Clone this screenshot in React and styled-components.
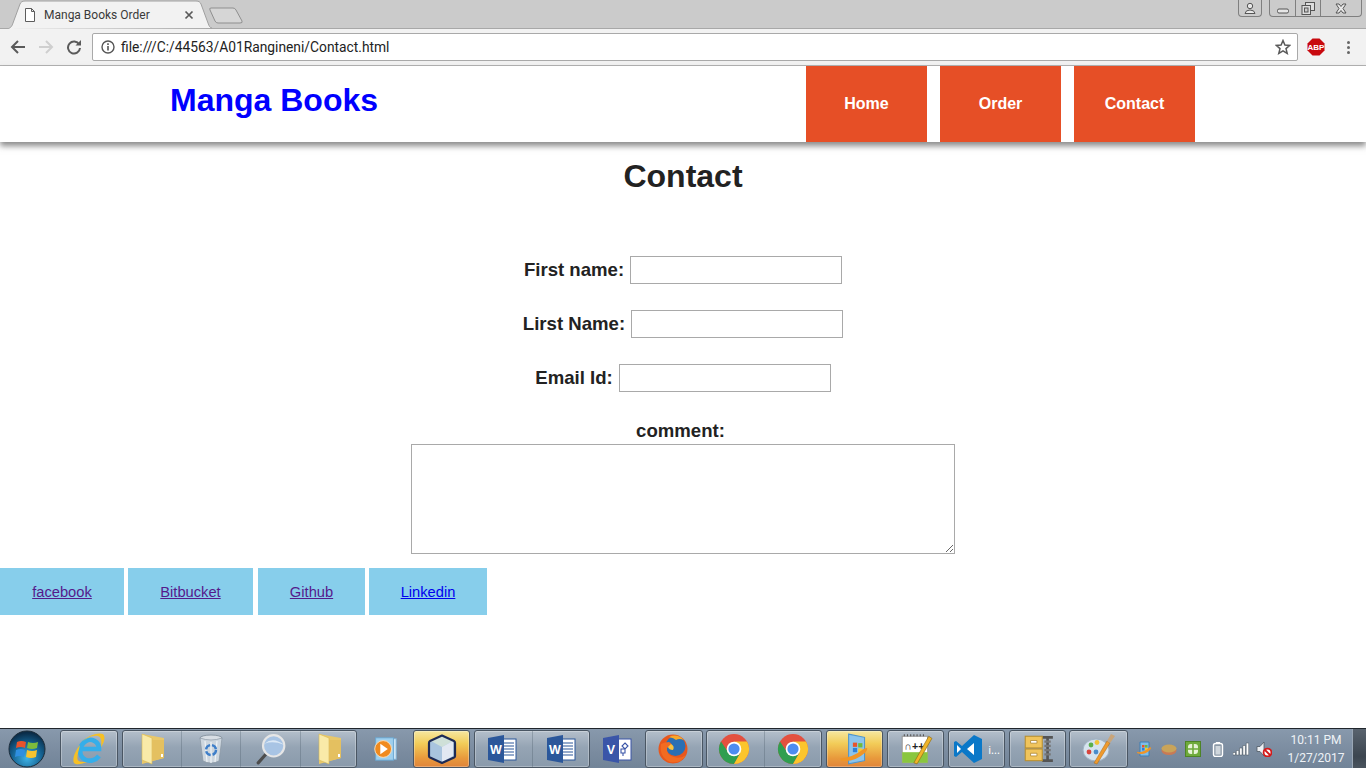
import React from "react";
import styled, { createGlobalStyle } from "styled-components";

const Global = createGlobalStyle`
  html, body { margin: 0; padding: 0; background: #fff; overflow: hidden; }
  * { box-sizing: border-box; }
`;

const Screen = styled.div`
  width: 1366px; height: 768px; display: flex; flex-direction: column; overflow: hidden;
  font-family: "Liberation Sans", Arial, sans-serif;
`;

/* browser chrome */
const TabStrip = styled.div`
  height: 29px; flex: none; background: #cbcbcb; border-bottom: 1px solid #a8a8a8;
  display: flex; align-items: flex-start; padding-left: 7px;
`;
const Tab = styled.div`
  position: relative; width: 205px; height: 29px; display: flex; align-items: center;
  padding: 1px 0 0 16px; font: 12px "Roboto", "Noto Sans", sans-serif; color: #3a3a3a;
`;
const TabShape = styled.svg`
  position: absolute; left: 0; top: 0; width: 205px; height: 29px;
`;
const TabFile = styled.svg`
  position: relative; width: 14px; height: 16px; flex: none; margin-right: 7px;
`;
const TabTitle = styled.span`
  position: relative; width: 140px; white-space: nowrap;
`;
const TabClose = styled.svg`position: relative; width: 10px; height: 10px; flex: none;`;
const NewTab = styled.svg`
  width: 38px; height: 20px; margin: 6px 0 0 -5px; flex: none;
`;
const Spacer = styled.div`flex: 1;`;
const WindowGroup = styled.div`
  display: flex; height: 17px; margin-right: ${p => p.$mr}px; border: 1px solid #7f7f7f; border-top: 0;
  border-radius: 0 0 4px 4px;
`;
const WindowButton = styled.div`
  width: ${p => p.$w}px; display: flex; align-items: center; justify-content: center;
  & + & { border-left: 1px solid #7f7f7f; }
`;
const MinimizeGlyph = styled.svg`width: 14px; height: 6px; margin-top: 5px;`;
const Toolbar = styled.div`
  height: 37px; flex: none; background: #f2f2f2; border-bottom: 1px solid #b4b4b4;
  display: flex; align-items: center; padding: 0 0 0 7px;
`;
const NavIcon = styled.div`
  width: 21px; height: 21px; margin-right: ${p => p.$mr}px; display: flex; align-items: center; justify-content: center; flex: none;
`;
const Omnibox = styled.div`
  width: 1206px; height: 28px; background: #fff; border: 1px solid #a9a9a9; border-radius: 2px;
  display: flex; align-items: center; padding: 0 6px 0 8px; flex: none;
`;
const OmniGlyph = styled.svg`flex: none;`;
const Url = styled.span`
  margin-left: 6px; flex: 1; font: 13.8px "Roboto", "Noto Sans", sans-serif; color: #222; white-space: nowrap;
`;
const Abp = styled.svg`width: 18px; height: 18px; margin-left: 9px; flex: none;`;
const Dots = styled.div`
  margin-left: 22px; display: flex; flex-direction: column; gap: 2px;
  & > i { display: block; width: 3px; height: 3px; background: #666; border-radius: 50%; }
`;

/* page */
const Page = styled.div`flex: 1; min-height: 0; background: #fff; display: flex; flex-direction: column;`;
const Header = styled.header`
  height: 76px; flex: none; background: #fff; display: flex; align-items: stretch;
  box-shadow: 0 4px 6px rgba(60,60,60,.6); position: relative; padding-left: 170px;
`;
const Brand = styled.div`
  width: 636px; color: #0000ff; font-size: 32px; font-weight: 700; line-height: 68px; white-space: nowrap;
`;
const Nav = styled.nav`display: flex; gap: 13px;`;
const NavItem = styled.a`
  width: 121px; background: #e64f26; color: #fff; font-size: 16px; font-weight: 700;
  display: flex; align-items: center; justify-content: center; text-decoration: none;
`;
const Title = styled.h1`
  margin: 16px 0 0; font-size: 32px; line-height: 37px; font-weight: 700; color: #222; text-align: center;
`;
const Form = styled.form`
  margin-top: 61px; display: flex; flex-direction: column; align-items: center;
`;
const Row = styled.div`
  height: 28px; margin-bottom: 26px; display: flex; align-items: center; gap: 6px;
`;
const Label = styled.label`
  font-size: 18.6px; font-weight: 700; color: #222; line-height: 28px; white-space: nowrap;
`;
const TextInput = styled.input`
  width: 212px; height: 28px; border: 1px solid #a9a9a9; background: #fff; padding: 0 4px; outline: 0; border-radius: 0;
`;
const CommentLabel = styled(Label)`
  display: block; height: 26px; line-height: 25px; padding-right: 5px;
`;
const Comment = styled.textarea`
  display: block; width: 544px; height: 110px; border: 1px solid #a9a9a9; background: #fff; outline: 0; border-radius: 0; margin: 0;
`;
const Links = styled.div`display: flex; margin-top: 14px;`;
const LinkBox = styled.a`
  width: ${p => p.$w}px; height: 47px; margin-right: ${p => p.$mr}px; background: #87ceeb; flex: none;
  display: flex; align-items: center; justify-content: center;
  font-size: 14.7px; text-decoration: underline; color: ${p => p.$visited ? "#551a8b" : "#0000ee"};
`;

/* taskbar */
const Taskbar = styled.div`
  height: 40px; flex: none; display: flex; align-items: stretch;
  background: linear-gradient(#8899ac, #7a8b9f 60%, #728498);
  border-top: 1px solid #20262c;
`;
const StartOrb = styled.svg`width: 38px; height: 38px; margin: 0 14px 0 8px; flex: none; align-self: center;`;
const Group = styled.div`
  display: flex; margin-left: ${p => p.$ml || 0}px; flex: none; margin-top: 1px;
  border: 1px solid ${p => p.$plain ? "transparent" : "#4a5663"}; border-radius: 3px;
  background: ${p => p.$plain ? "transparent"
    : p.$warm ? "linear-gradient(#f6e7a0, #f2cc58 35%, #e89a3c 75%, #e0843a)"
    : "linear-gradient(#b4bfcb, #95a4b4 45%, #8a9aab)"};
  box-shadow: ${p => p.$plain ? "none" : "inset 0 0 0 1px rgba(255,255,255,.28)"};
`;
const TaskItem = styled.div`
  width: ${p => p.$w}px; display: flex; align-items: center; justify-content: center; gap: 5px;
  padding-right: ${p => p.$pr || 0}px;
  & + & { border-left: 1px solid rgba(70,85,100,.3); }
  background: ${p => p.$lit ? "linear-gradient(#cdd6df, #a9b6c4)" : "transparent"};
  color: #fff; font: 11px "Noto Sans", sans-serif;
`;
const Ico = styled.svg`width: ${p => p.$s || 30}px; height: ${p => p.$s || 30}px; flex: none;`;
const Tray = styled.div`
  flex: 1; display: flex; align-items: center; padding-left: 8px; min-width: 0;
`;
const TrayIcon = styled.svg`width: 16px; height: 16px; margin-right: ${p => p.$mr}px; flex: none;`;
const Clock = styled.div`
  width: 70px; margin-left: 9px; text-align: center; color: #eef2f6; font: 12px/18px "Roboto", "Noto Sans", sans-serif; white-space: nowrap;
`;
const ShowDesktop = styled.div`
  align-self: stretch; width: 14px; margin-left: auto; background: linear-gradient(#59636e, #3c4650 70%, #4a545e); border-left: 1px solid #9aa7b5;
`;

const Folder = () => (
  <Ico viewBox="0 0 30 32" $s={32}>
    <path d="M5 1 L27 5 V25 L5 31Z" fill="#e9c86a" />
    <path d="M5 1 L15 5 V31 L5 27Z" fill="#f9eaa8" stroke="#d9b850" strokeWidth=".6" />
    <path d="M15 7 H27 V25 L15 28Z" fill="#e4c060" />
    <path d="M24 21 h2 v3 h-2z" fill="#fff" />
  </Ico>
);
const Bin = () => (
  <Ico viewBox="0 0 30 32" $s={32}>
    <ellipse cx="15" cy="5" rx="11" ry="3" fill="#d8dee4" stroke="#8b98a4" />
    <path d="M4 5 L7 28 Q15 32 23 28 L26 5 Q15 9 4 5Z" fill="#cdd6de" stroke="#8a97a3" strokeWidth=".7" />
    <path d="M9 8 L11 29 M15 9 V30 M21 8 L19 29" stroke="#eef2f5" strokeWidth="1.2" />
    <circle cx="15" cy="17" r="5" fill="none" stroke="#3f7fc9" strokeWidth="2.4" strokeDasharray="6 2" />
  </Ico>
);
const Magnifier = () => (
  <Ico viewBox="0 0 30 30" $s={32}>
    <path d="M11 19 L3 28" stroke="#4d4d4d" strokeWidth="3" strokeLinecap="round" />
    <circle cx="17.5" cy="12" r="10" fill="#a8c4e4" stroke="#e6e6e6" strokeWidth="2" />
    <path d="M9 10 Q17 3 27 11 Q17 7 9 10Z" fill="#dce9f6" />
  </Ico>
);
const Media = () => (
  <Ico viewBox="0 0 30 30" $s={28}>
    <rect x="9" y="4" width="18" height="22" fill="#cfe6f5" stroke="#7fb1d6" />
    <rect x="5" y="3" width="19" height="24" fill="#9fd0ee" stroke="#6aa6d0" />
    <circle cx="13" cy="15" r="9" fill="#f08a1e" stroke="#fbe2bf" strokeWidth="1" />
    <path d="M10 9.5 L18 15 L10 20.5Z" fill="#fff" />
  </Ico>
);
const Cube = () => (
  <Ico viewBox="0 0 32 32" $s={32}>
    <path d="M16 2 L28 8 V24 L16 30 L4 24 V8Z" fill="#a9c4de" />
    <path d="M16 3 L27 8 L16 14 L5 8Z" fill="#cfe0d8" />
    <path d="M16 14 L27 8 V23 L16 29Z" fill="#e2e8f2" />
    <path d="M16 2.5 L28 8 Q29 8.5 29 10 V23 Q29 24 28 24.5 L16 30 L4 24.5 Q3 24 3 23 V10 Q3 8.5 4 8Z" fill="none" stroke="#1d2a55" strokeWidth="2.2" strokeLinejoin="round" />
  </Ico>
);
const OfficeDoc = ({ letter, color, visio }) => (
  <Ico viewBox="0 0 32 32" $s={32}>
    <rect x="14" y="6" width="16" height="21" fill="#fff" stroke={color} />
    {visio ? (
      <path d="M20 16 h4 v4 h-4z M24 10 l3 3 -3 3 -3 -3z M22 20 v3" fill="none" stroke={color} strokeWidth="1.1" />
    ) : (
      <path d="M17 10 H28 M17 13 H28 M17 16 H28 M17 19 H28 M17 22 H28" stroke={color} strokeWidth="1.1" />
    )}
    <path d="M2 5 L18 2 V30 L2 27Z" fill={color} />
    <text x="9.8" y="20.5" textAnchor="middle" fill="#fff" fontFamily="Liberation Sans" fontWeight="700" fontSize="12.5">{letter}</text>
  </Ico>
);
const Firefox = () => (
  <Ico viewBox="0 0 32 32" $s={32}>
    <circle cx="16" cy="16" r="14.5" fill="#e8571c" />
    <circle cx="18.5" cy="13" r="10" fill="#2b6fb3" />
    <path d="M12 4 Q20 0 27 7 Q22 5 19 7 Q17 5 12 4Z" fill="#f7a82a" />
    <path d="M4 11 Q2 24 13 29 Q24 31 29 22 Q24 26 17 24 Q9 22 10 15 Q12 13 15 14 Q15 10 12 9 Q8 9 4 11Z" fill="#f26b21" />
    <path d="M14 11 Q18 13 16 17 Q12 17 11 14Z" fill="#f9c23c" />
  </Ico>
);
const Chrome = () => (
  <Ico viewBox="0 0 32 32" $s={32}>
    <circle cx="16" cy="16" r="15" fill="#e3503f" />
    <path d="M3 8.5 A15 15 0 0 0 16 31 L22 20.5 L16 22 L10 19Z" fill="#2f9e50" />
    <path d="M29 8.5 H16 L22 14 L22 20.5 L16 31 A15 15 0 0 0 29 8.5Z" fill="#fbc52d" />
    <circle cx="16" cy="16" r="7.3" fill="#fff" />
    <circle cx="16" cy="16" r="5.6" fill="#4d8cf0" />
  </Ico>
);
const WinDoc = () => (
  <Ico viewBox="0 0 32 32" $s={34}>
    <path d="M10 2 L25 5 V27 L10 30Z" fill="#8cc4ec" stroke="#4e95cc" />
    <path d="M14 10 h4 v4 h-4z" fill="#e8542d" /><path d="M19 10.5 h4 v4 h-4z" fill="#6fbb3a" />
    <path d="M14 15 h4 v4 h-4z" fill="#2e80d8" /><path d="M19 15.5 h4 v4 h-4z" fill="#fbc82f" />
    <path d="M2 25 Q14 24 24 16 Q30 13 26 19 Q15 29 3 27Z" fill="#ef9527" />
  </Ico>
);
const NotepadPP = () => (
  <Ico viewBox="0 0 32 32" $s={34}>
    <rect x="3" y="4" width="24" height="25" fill="#fff" stroke="#9a9a9a" />
    <path d="M3 19 H27 V29 H3Z" fill="#8ac63f" />
    <path d="M5 4 v-2 M8 4 v-2 M11 4 v-2 M14 4 v-2 M17 4 v-2 M20 4 v-2 M23 4 v-2" stroke="#555" />
    <text x="5" y="17" fontFamily="Liberation Sans" fontWeight="700" fontSize="10" fill="#222">∩++</text>
    <path d="M14 29 L28 4 L31 6 L17 30Z" fill="#f0b429" stroke="#8a6a12" strokeWidth=".6" />
  </Ico>
);
const VSCode = () => (
  <Ico viewBox="0 0 30 30" $s={30}>
    <path d="M21 1 L29 5 V25 L21 29 L9 18 L3 23 L1 22 V8 L3 7 L9 12Z" fill="#0a78c8" />
    <path d="M21 9 L14 15 L21 21Z M4 11 V19 L8 15Z" fill="#fff" />
  </Ico>
);
const Archive = () => (
  <Ico viewBox="0 0 32 32" $s={34}>
    <path d="M20 5 H30 M20 27 H30 M25 5 V27" stroke="#555" strokeWidth="2.5" />
    <path d="M22 9 h6 M22 13 h6 M22 17 h6 M22 21 h6" stroke="#777" strokeWidth="2" />
    <rect x="4" y="4" width="16" height="11" fill="#f0c45c" stroke="#b98f2f" />
    <rect x="4" y="16" width="16" height="11" fill="#f0c45c" stroke="#b98f2f" />
    <path d="M9 8 h6 v2.5 h-6z M9 20 h6 v2.5 h-6z" fill="#fff" stroke="#a8802a" strokeWidth=".7" />
  </Ico>
);
const Palette = () => (
  <Ico viewBox="0 0 34 32" $s={34}>
    <ellipse cx="14" cy="17" rx="13" ry="11" fill="#d6e3ee" stroke="#9fb2c3" />
    <circle cx="7" cy="19" r="2.4" fill="#d8453d" /><circle cx="9" cy="12" r="2.4" fill="#5ab04b" />
    <circle cx="15" cy="9.5" r="2.4" fill="#f0c43a" /><circle cx="14" cy="19" r="2.4" fill="#4a8ccc" />
    <path d="M12 30 L25 8 L28 10 L15 31Z" fill="#ef9a2d" stroke="#a96a18" strokeWidth=".5" />
    <path d="M25 8 L29 1 L33 3 L28 10Z" fill="#c9a57a" />
  </Ico>
);
const IE = () => (
  <Ico viewBox="0 0 34 34" $s={34}>
    <path d="M8.5 17 H27 C27 9 19 6 14 9 C7 13 6 24 13 27.5 C18 30 24 28 27 24" fill="none" stroke="#35aeea" strokeWidth="4.6" />
    <path d="M9 11 C15 4 25 0 31 2 C34 5 32 11 29 15 C30 9 29 5 26 4 C20 3 13 7 9 11Z" fill="#f6c025" />
    <path d="M8 13 C3 19 0 27 2 31 C5 34 11 31 15 30 C10 30 6 30 5.5 27 C5 23 7 18 8 13Z" fill="#f6c025" />
  </Ico>
);

const App = () => (
  <Screen>
    <Global />
    <TabStrip>
      <Tab>
        <TabShape viewBox="0 0 205 29">
          <path d="M0 29 C4 28 5 26 6 23 L13 4 C14 2 15 1 18 1 H189 C192 1 193 2 194 4 L201 23 C202 26 203 28 205 28" fill="#f2f2f2" stroke="#a0a0a0" />
        </TabShape>
        <TabFile viewBox="0 0 14 16">
          <path d="M2.5 1.5 H8.5 L11.5 4.5 V14.5 H2.5Z M8.5 1.5 V4.5 H11.5" fill="#fff" stroke="#5c5c5c" />
        </TabFile>
        <TabTitle>Manga Books Order</TabTitle>
        <TabClose viewBox="0 0 10 10">
          <path d="M1.5 1.5 L8.5 8.5 M8.5 1.5 L1.5 8.5" stroke="#5a5a5a" strokeWidth="1.7" />
        </TabClose>
      </Tab>
      <NewTab viewBox="0 0 38 20">
        <path d="M4 2 H26 Q28 2 29 4 L35 15 Q36 17 33 17 H11 Q9 17 8 15 L3 4 Q2 2 4 2Z" fill="#d6d6d6" stroke="#8f8f8f" />
      </NewTab>
      <Spacer />
      <WindowGroup $mr={7}>
        <WindowButton $w={22}>
          <svg width="14" height="13" viewBox="0 0 14 13">
            <circle cx="7" cy="4" r="2.7" fill="#e8e8e8" stroke="#555" />
            <path d="M2 11.5 Q2.5 8 7 8 Q11.5 8 12 11.5Z" fill="#e8e8e8" stroke="#555" />
          </svg>
        </WindowButton>
      </WindowGroup>
      <WindowGroup $mr={4}>
        <WindowButton $w={25}>
          <MinimizeGlyph viewBox="0 0 14 6"><rect x="1.5" y="1" width="11" height="4" rx="1.5" fill="#e6e6e6" stroke="#555" /></MinimizeGlyph>
        </WindowButton>
        <WindowButton $w={25}>
          <svg width="14" height="13" viewBox="0 0 14 13">
            <rect x="4.5" y=".5" width="9" height="8" fill="#ddd" stroke="#555" />
            <rect x="1" y="3.5" width="8.5" height="9" fill="#ddd" stroke="#555" /><rect x="3.5" y="6" width="3.5" height="4" fill="#ccc" stroke="#555" />
          </svg>
        </WindowButton>
        <WindowButton $w={41}>
          <svg width="14" height="11" viewBox="0 0 14 11"><path d="M2 1 H5 L7 3.5 L9 1 H12 L9 5.5 L12 10 H9 L7 7.5 L5 10 H2 L5 5.5Z" fill="#e8e8e8" stroke="#555" /></svg>
        </WindowButton>
      </WindowGroup>
    </TabStrip>
    <Toolbar>
      <NavIcon $mr={7}>
        <svg width="16" height="14" viewBox="0 0 16 14"><path d="M15 7 H2.5 M8 1 L2 7 L8 13" fill="none" stroke="#5a5a5a" strokeWidth="2" /></svg>
      </NavIcon>
      <NavIcon $mr={7}>
        <svg width="16" height="14" viewBox="0 0 16 14"><path d="M1 7 H13.5 M8 1 L14 7 L8 13" fill="none" stroke="#cfcfcf" strokeWidth="2" /></svg>
      </NavIcon>
      <NavIcon $mr={8}>
        <svg width="16" height="16" viewBox="0 0 16 16"><path d="M13.2 5.5 A6 6 0 1 0 14 9" fill="none" stroke="#5a5a5a" strokeWidth="2" /><path d="M9.5 6.5 H15 V1Z" fill="#5a5a5a" /></svg>
      </NavIcon>
      <Omnibox>
        <OmniGlyph width="14" height="14" viewBox="0 0 14 14">
          <circle cx="7" cy="7" r="6" fill="none" stroke="#555" strokeWidth="1.4" />
          <path d="M7 6 V10.5 M7 3.3 V5" stroke="#555" strokeWidth="1.6" />
        </OmniGlyph>
        <Url>file:///C:/44563/A01Rangineni/Contact.html</Url>
        <OmniGlyph width="16" height="16" viewBox="0 0 16 16">
          <path d="M8 1.5 L9.9 6 L14.8 6.4 L11 9.6 L12.2 14.4 L8 11.8 L3.8 14.4 L5 9.6 L1.2 6.4 L6.1 6Z" fill="none" stroke="#5a5a5a" strokeWidth="1.5" />
        </OmniGlyph>
      </Omnibox>
      <Abp viewBox="0 0 18 18">
        <path d="M5.5 0.5 H12.5 L17.5 5.5 V12.5 L12.5 17.5 H5.5 L0.5 12.5 V5.5Z" fill="#c8090e" />
        <text x="9" y="12" textAnchor="middle" fill="#fff" fontFamily="Liberation Sans" fontWeight="700" fontSize="8">ABP</text>
      </Abp>
      <Dots><i /><i /><i /></Dots>
    </Toolbar>
    <Page>
      <Header>
        <Brand>Manga Books</Brand>
        <Nav>
          <NavItem>Home</NavItem>
          <NavItem>Order</NavItem>
          <NavItem>Contact</NavItem>
        </Nav>
      </Header>
      <Title>Contact</Title>
      <Form>
        <Row><Label>First name:</Label><TextInput /></Row>
        <Row><Label>Lirst Name:</Label><TextInput /></Row>
        <Row><Label>Email Id:</Label><TextInput /></Row>
        <CommentLabel>comment:</CommentLabel>
        <Comment />
      </Form>
      <Links>
        <LinkBox $w={124} $mr={4} $visited href="#">facebook</LinkBox>
        <LinkBox $w={125} $mr={5} $visited href="#">Bitbucket</LinkBox>
        <LinkBox $w={107} $mr={4} $visited href="#">Github</LinkBox>
        <LinkBox $w={118} $mr={0} href="#">Linkedin</LinkBox>
      </Links>
    </Page>
    <Taskbar>
      <StartOrb viewBox="0 0 38 38">
        <defs>
          <radialGradient id="orb" cx=".5" cy=".75" r=".7">
            <stop offset="0" stopColor="#3fb4e8" /><stop offset=".6" stopColor="#14608f" /><stop offset="1" stopColor="#0b2c48" />
          </radialGradient>
        </defs>
        <circle cx="19" cy="19" r="18" fill="url(#orb)" stroke="#1c2b38" />
        <path d="M9 12 Q13 10 18 12 L17 18 Q13 16 8 18Z" fill="#e8532c" />
        <path d="M20 12 Q25 14 30 12 L29 18 Q24 20 19 18Z" fill="#7dbb3c" />
        <path d="M8 20 Q13 18 17 20 L16 27 Q12 25 7 27Z" fill="#2f8fe0" />
        <path d="M19 20 Q24 22 29 20 L28 27 Q23 29 18 27Z" fill="#f7c32e" />
      </StartOrb>
      <Group><TaskItem $w={56}><IE /></TaskItem></Group>
      <Group $ml={4}>
        <TaskItem $w={58}><Folder /></TaskItem>
        <TaskItem $w={59}><Bin /></TaskItem>
        <TaskItem $w={60}><Magnifier /></TaskItem>
        <TaskItem $w={56}><Folder /></TaskItem>
      </Group>
      <Group $plain><TaskItem $w={54}><Media /></TaskItem></Group>
      <Group $warm><TaskItem $w={55}><Cube /></TaskItem></Group>
      <Group $ml={4}>
        <TaskItem $w={57} $pr={3}><OfficeDoc letter="W" color="#2b579a" /></TaskItem>
        <TaskItem $w={57}><OfficeDoc letter="W" color="#2b579a" /></TaskItem>
      </Group>
      <Group $plain $ml={1}><TaskItem $w={51} $pr={2}><OfficeDoc letter="V" color="#3a55a8" visio /></TaskItem></Group>
      <Group $ml={1}><TaskItem $w={56} $pr={2}><Firefox /></TaskItem></Group>
      <Group $ml={3}>
        <TaskItem $w={57} $pr={4}><Chrome /></TaskItem>
        <TaskItem $w={57}><Chrome /></TaskItem>
      </Group>
      <Group $warm $ml={4}><TaskItem $w={55}><WinDoc /></TaskItem></Group>
      <Group $ml={4}><TaskItem $w={55}><NotepadPP /></TaskItem></Group>
      <Group $ml={4}><TaskItem $w={55}><VSCode />i...</TaskItem></Group>
      <Group $ml={4}><TaskItem $w={55}><Archive /></TaskItem></Group>
      <Group $ml={3}><TaskItem $w={57}><Palette /></TaskItem></Group>
      <Tray>
        <TrayIcon viewBox="0 0 16 16" $mr={9}>
          <path d="M4 1 H13 V15 H4Z" fill="#7fbde8" stroke="#3e7fb5" />
          <path d="M6 4 h2.5 v2.5 h-2.5z" fill="#e8542d" /><path d="M9 4 h2.5 v2.5 h-2.5z" fill="#6fbb3a" />
          <path d="M6 7 h2.5 v2.5 h-2.5z" fill="#2e80d8" /><path d="M9 7 h2.5 v2.5 h-2.5z" fill="#fbc82f" />
          <path d="M1 11 Q8 12 14 6 Q16 7 14 9 Q8 15 1 12Z" fill="#ef9527" />
        </TrayIcon>
        <TrayIcon viewBox="0 0 16 16" $mr={8}>
          <ellipse cx="8" cy="9.5" rx="7.5" ry="4.5" fill="#c97a55" />
          <ellipse cx="8" cy="7.5" rx="7.5" ry="4" fill="#c9a45a" />
        </TrayIcon>
        <TrayIcon viewBox="0 0 16 16" $mr={9}>
          <rect x=".5" y=".5" width="15" height="15" fill="#6eaa3a" stroke="#4d8426" />
          <rect x="3" y="3" width="10" height="10" rx="3" fill="#e6f2d6" />
          <path d="M8 3 V13 M3 8 H13" stroke="#6eaa3a" strokeWidth="1.6" />
        </TrayIcon>
        <TrayIcon viewBox="0 0 16 16" $mr={7}>
          <rect x="3.5" y="2.5" width="9" height="13" rx="2" fill="#8c9aa8" stroke="#fff" strokeWidth="1.4" />
          <rect x="6" y="1" width="4" height="1.5" fill="#fff" />
          <rect x="5.5" y="5" width="5" height="8.5" fill="#cfd6dc" />
        </TrayIcon>
        <TrayIcon viewBox="0 0 16 16" $mr={7}>
          <path d="M0 14 h2.5 v-2.5 h-2.5z M3.3 14 h2.5 v-4.5 h-2.5z M6.6 14 h2.5 v-7 h-2.5z M9.9 14 h2.5 v-9.5 h-2.5z M13.2 14 h2.5 v-12 h-2.5z" fill="#fff" stroke="#3f4a55" strokeWidth=".5" />
        </TrayIcon>
        <TrayIcon viewBox="0 0 16 16" $mr={0}>
          <path d="M1 5.5 H4 L8 1 V15 L4 10.5 H1Z" fill="#eef1f4" stroke="#4f5963" strokeWidth=".8" />
          <circle cx="11.5" cy="11.5" r="3.9" fill="#fff" stroke="#d41a1a" strokeWidth="1.8" />
          <path d="M9 9 L14 14" stroke="#d41a1a" strokeWidth="1.8" />
        </TrayIcon>
        <Clock>10:11 PM<br />1/27/2017</Clock>
        <ShowDesktop />
      </Tray>
    </Taskbar>
  </Screen>
);

export default App;
